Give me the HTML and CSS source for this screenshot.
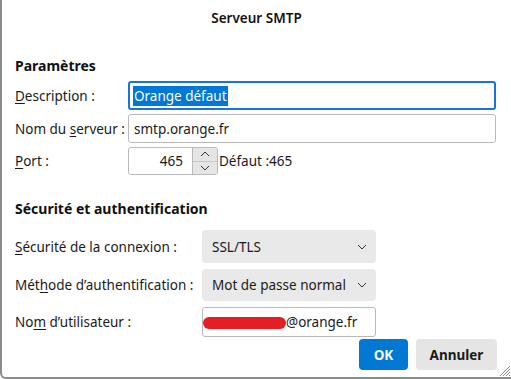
FILE: index.html
```html
<!DOCTYPE html>
<html lang="fr">
<head>
<meta charset="utf-8">
<title>Serveur SMTP</title>
<link rel="stylesheet" href="styles.css">
</head>
<body>
<div class="dialog">
  <div class="title">Serveur SMTP</div>
  <div class="content">
    <div class="heading h1">Paramètres</div>
    <div class="grid g1">
      <label class="lbl"><u>D</u>escription :</label>
      <div class="field focused"><span class="sel">Orange défaut</span></div>
      <label class="lbl">Nom du <u>s</u>erveur :</label>
      <div class="field">smtp.orange.fr</div>
      <label class="lbl"><u>P</u>ort :</label>
      <div class="portrow">
        <div class="port">
          <span class="portval">465</span>
          <div class="spin">
            <span class="spinbtn up"><svg width="10" height="6" viewBox="0 0 10 6"><path d="M1 5 L5 1 L9 5" fill="none" stroke="#333" stroke-width="1"/></svg></span>
            <span class="spinbtn down"><svg width="10" height="6" viewBox="0 0 10 6"><path d="M1 1 L5 5 L9 1" fill="none" stroke="#333" stroke-width="1"/></svg></span>
          </div>
        </div>
        <span class="deflt">Défaut :465</span>
      </div>
    </div>
    <div class="heading h2">Sécurité et authentification</div>
    <div class="grid g2">
      <label class="lbl"><u>S</u>écurité de la connexion :</label>
      <div class="select s1">SSL/TLS<svg class="chev" width="10" height="6" viewBox="0 0 10 6"><path d="M1 1 L5 5 L9 1" fill="none" stroke="#333" stroke-width="1"/></svg></div>
      <label class="lbl">Mét<u>h</u>ode d’authentification :</label>
      <div class="select s2">Mot de passe normal<svg class="chev" width="10" height="6" viewBox="0 0 10 6"><path d="M1 1 L5 5 L9 1" fill="none" stroke="#333" stroke-width="1"/></svg></div>
      <label class="lbl">No<u>m</u> d’utilisateur :</label>
      <div class="field user"><span class="hidden">xxxxxxxxxxxxx</span><span class="redact"></span>@orange.fr</div>
    </div>
    <div class="buttons">
      <button class="btn ok">OK</button>
      <button class="btn cancel">Annuler</button>
    </div>
  </div>
  <svg class="grip" width="12" height="12" viewBox="0 0 12 12"><path d="M11 1 L1 11 M11 4 L4 11 M11 7 L7 11 M11 10 L10 11" stroke="#888" stroke-width="1"/></svg>
</div>
</body>
</html>
```
FILE: styles.css
```css
html, body {
  margin: 0;
  padding: 0;
  background: #ffffff;
}
.dialog {
  position: relative;
  width: 511px;
  height: 379px;
  box-sizing: border-box;
  border-left: 2px solid #8c8c8c;
  border-bottom: 2px solid #8c8c8c;
  border-bottom-left-radius: 6px;
  background: #ffffff;
  font-family: "Noto Sans", "Open Sans", sans-serif;
  font-size: 13.5px;
  color: #1a1a1a;
  overflow: hidden;
}
.title {
  height: 36px;
  line-height: 36px;
  text-align: center;
  font-weight: 600;
  font-size: 13.5px;
  color: #111;
}
.content {
  padding-left: 13px;
  padding-right: 14px;
}
.heading {
  font-weight: 700;
  font-size: 14px;
  color: #111;
}
.h1 {
  margin-top: 18px;
  height: 24px;
  line-height: 24px;
}
.h2 {
  margin-top: 22px;
  height: 24px;
  line-height: 24px;
}
.grid {
  display: grid;
  align-items: center;
}
.g1 {
  grid-template-columns: 113px 368px;
  row-gap: 4px;
  margin-top: 3px;
}
.g2 {
  grid-template-columns: 187px 174px;
  row-gap: 6px;
  margin-top: 9px;
}
.lbl {
  white-space: nowrap;
}
.lbl u {
  text-decoration-thickness: 1px;
  text-underline-offset: 2px;
}
.field {
  box-sizing: border-box;
  height: 29px;
  border: 1px solid #b9b9b9;
  border-radius: 3px;
  padding-left: 5px;
  display: flex;
  align-items: center;
  white-space: nowrap;
  background: #fff;
}
.field.focused {
  border: 2px solid #1a73d9;
  padding-left: 3px;
}
.sel {
  background: #0078d7;
  color: #fff;
  line-height: 20px;
  padding: 0 1px;
}
.portrow {
  display: flex;
  align-items: center;
}
.port {
  box-sizing: border-box;
  width: 90px;
  height: 28px;
  border: 1px solid #b9b9b9;
  border-radius: 3px;
  display: flex;
  overflow: hidden;
}
.portval {
  flex: 1;
  text-align: right;
  padding-right: 9px;
  line-height: 26px;
}
.spin {
  width: 24px;
  display: flex;
  flex-direction: column;
  border-left: 1px solid #b9b9b9;
}
.spinbtn {
  flex: 1;
  background: #e5e5e5;
  display: flex;
  align-items: center;
  justify-content: center;
}
.spinbtn.up {
  border-bottom: 1px solid #c8c8c8;
}
.deflt {
  margin-left: 1px;
}
.select {
  box-sizing: border-box;
  height: 32px;
  background: #e9e9e9;
  border-radius: 4px;
  padding-left: 10px;
  padding-right: 9px;
  display: flex;
  align-items: center;
  justify-content: space-between;
  white-space: nowrap;
}
.s1 {
  height: 33px;
}
.chev {
  flex: none;
}
.user {
  height: 30px;
  position: relative;
  padding-left: 0;
}
.hidden {
  visibility: hidden;
  display: inline-block;
  width: 83px;
  overflow: hidden;
}
.redact {
  position: absolute;
  left: 0;
  top: 9px;
  width: 83px;
  height: 12px;
  background: #e41e24;
  border-radius: 6px;
}
.buttons {
  display: flex;
  justify-content: flex-end;
  gap: 8px;
  margin-top: 2px;
}
.btn {
  height: 31px;
  border: none;
  border-radius: 4px;
  font-family: "Noto Sans", "Open Sans", sans-serif;
  font-weight: 700;
  font-size: 13.5px;
  padding: 0;
}
.ok {
  width: 49px;
  background: #0078d4;
  color: #fff;
}
.cancel {
  width: 81px;
  background: #e5e5e5;
  color: #1a1a1a;
}
.grip {
  position: absolute;
  right: 0;
  bottom: 0;
}
```
